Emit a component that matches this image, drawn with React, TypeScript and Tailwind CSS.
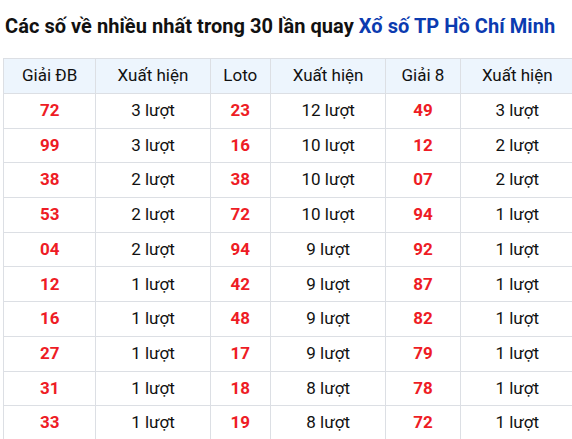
const rows: [string, string, string, string, string, string][] = [
  ["72", "3 lượt", "23", "12 lượt", "49", "3 lượt"],
  ["99", "3 lượt", "16", "10 lượt", "12", "2 lượt"],
  ["38", "2 lượt", "38", "10 lượt", "07", "2 lượt"],
  ["53", "2 lượt", "72", "10 lượt", "94", "1 lượt"],
  ["04", "2 lượt", "94", "9 lượt", "92", "1 lượt"],
  ["12", "1 lượt", "42", "9 lượt", "87", "1 lượt"],
  ["16", "1 lượt", "48", "9 lượt", "82", "1 lượt"],
  ["27", "1 lượt", "17", "9 lượt", "79", "1 lượt"],
  ["31", "1 lượt", "18", "8 lượt", "78", "1 lượt"],
  ["33", "1 lượt", "19", "8 lượt", "72", "1 lượt"],
];

const headers = ["Giải ĐB", "Xuất hiện", "Loto", "Xuất hiện", "Giải 8", "Xuất hiện"];
const widths = ["w-[92px]", "w-[114px]", "w-[60px]", "w-[115px]", "w-[74px]", "w-[114px]"];

export default function App() {
  return (
    <div className="w-[572px] h-[439px] overflow-hidden bg-white font-['Roboto',sans-serif] text-[#111]">
      <h2 className="pl-[5px] pt-[14px] h-[58px] text-[20px] font-bold leading-[24px] tracking-[0.05px] whitespace-nowrap">
        Các số về nhiều nhất trong 30 lần quay <span className="text-[#0b3bb0]">Xổ số TP Hồ Chí Minh</span>
      </h2>
      <table className="ml-[3px] w-[572px] border-collapse table-fixed text-[17px]">
        <thead>
          <tr className="h-[35px] bg-[#edf5fd]">
            {headers.map((h, i) => (
              <th key={i} className={`${widths[i]} border border-[#dcdfe4] font-normal text-center`}>
                {h}
              </th>
            ))}
          </tr>
        </thead>
        <tbody>
          {rows.map((r, ri) => (
            <tr key={ri} className="h-[34.7px]">
              {r.map((c, ci) => (
                <td
                  key={ci}
                  className={
                    ci % 2 === 0
                      ? "border border-[#dcdfe4] text-center font-bold text-[#ee1c25]"
                      : "border border-[#dcdfe4] text-center"
                  }
                >
                  {c}
                </td>
              ))}
            </tr>
          ))}
        </tbody>
      </table>
    </div>
  );
}
